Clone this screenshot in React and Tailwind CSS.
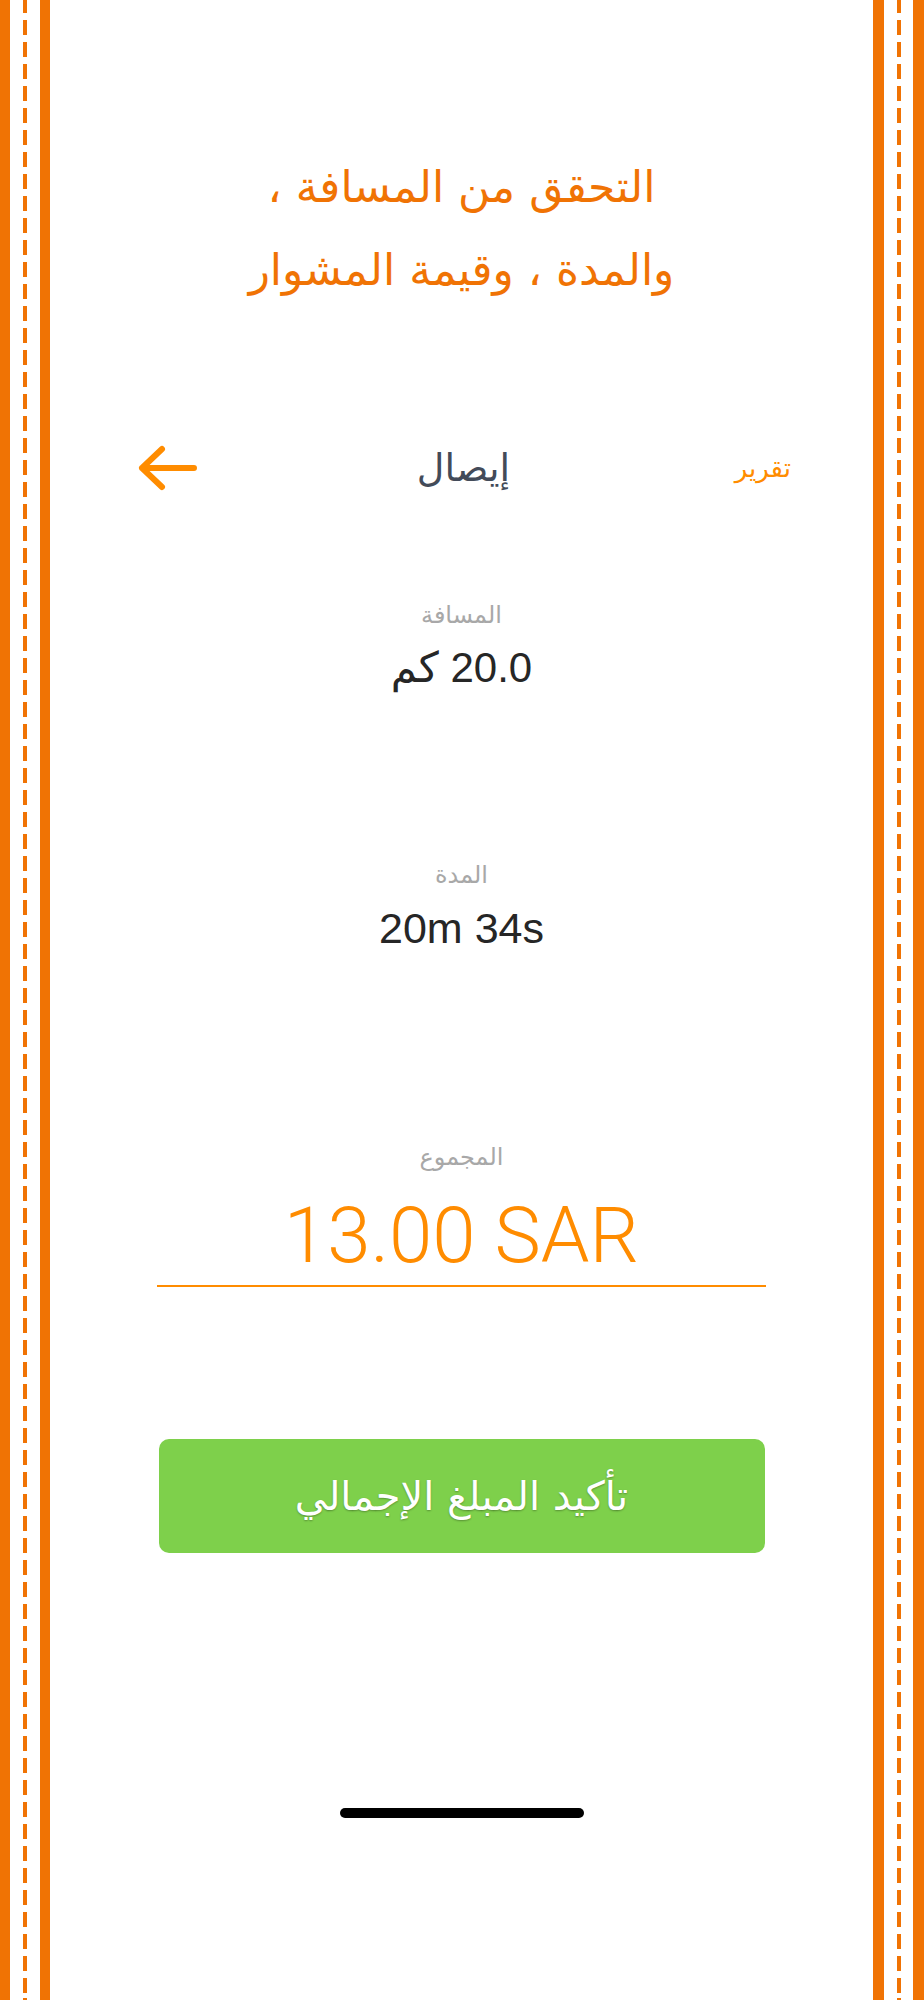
import React from 'react';

const arabic = { fontFamily: '"DejaVu Sans", sans-serif' };
const latin = { fontFamily: '"Liberation Sans", "DejaVu Sans", sans-serif' };

function Rail({ side }) {
  // solid stripe, dashed stripe, solid stripe
  const outer = side === 'left' ? 'w-[10px]' : 'w-[11px]';
  return (
    <div className="flex h-full shrink-0">
      <div className={`${outer} bg-[#f07304]`} />
      <div className="w-[13px]" />
      <div className="w-[4px] bg-[repeating-linear-gradient(to_bottom,#f07304_0px,#f07304_15px,transparent_15px,transparent_22px)] bg-[position:0_-2px]" />
      <div className={side === 'left' ? 'w-[13px]' : 'w-[12px]'} />
      <div className={`${outer} bg-[#f07304]`} />
    </div>
  );
}

function BackArrow() {
  return (
    <svg width="64" height="48" viewBox="0 0 64 48" fill="none">
      <path
        d="M58 24H6M26 5L6 24L26 43"
        stroke="#ff8c00"
        strokeWidth="6"
        strokeLinecap="round"
        strokeLinejoin="round"
      />
    </svg>
  );
}

function Stat({ label, value, top, size }) {
  return (
    <div className={`flex flex-col items-center ${top}`}>
      <div className="text-[24px] leading-[28px] text-[#a8a8a8]" style={arabic} dir="rtl">
        {label}
      </div>
      <div className={`mt-[15px] ${size} leading-[48px] text-[#262626]`} style={latin} dir="rtl">
        {value}
      </div>
    </div>
  );
}

export default function App() {
  return (
    <div className="flex h-[2000px] w-full bg-white">
      <Rail side="left" />

      <div className="flex flex-1 flex-col">
        {/* Title */}
        <h1
          className="mt-[145px] text-center text-[44px] leading-[83px] text-[#f07304]"
          style={arabic}
          dir="rtl"
        >
          التحقق من المسافة ،
          <br />
          والمدة ، وقيمة المشوار
        </h1>

        {/* Header row */}
        <div className="mt-[127px] flex h-[60px] items-center justify-between pl-[86px] pr-[82px]">
          <BackArrow />
          <span className="text-[38px] text-[#434b59]" style={arabic} dir="rtl">
            إيصال
          </span>
          <span className="w-[64px] text-right text-[26px] text-[#ff8c00]" style={arabic} dir="rtl">
            تقرير
          </span>
        </div>

        <Stat label="المسافة" value="20.0 كم" top="mt-[103px]" size="text-[42px]" />
        <Stat label="المدة" value="20m 34s" top="mt-[169px]" size="text-[43px]" />

        {/* Total */}
        <div className="mt-[191px] flex flex-col items-center">
          <div className="text-[24px] leading-[28px] text-[#a8a8a8]" style={arabic} dir="rtl">
            المجموع
          </div>
          <div
            className="mt-[22px] text-[78px] font-light leading-[86px] text-[#ff8c00]"
            style={{ fontFamily: 'Roboto, "Liberation Sans", sans-serif' }}
          >
            13.00 SAR
          </div>
          <div className="mt-[6px] h-[2px] w-[609px] bg-[#ff8c00]" />
        </div>

        <button
          className="mx-auto mt-[152px] flex h-[114px] w-[606px] items-center justify-center rounded-[10px] bg-[#7ed04b] text-[40px] text-white [text-shadow:0_1px_2px_rgba(0,0,0,0.3)]"
          style={arabic}
          dir="rtl"
        >
          تأكيد المبلغ الإجمالي
        </button>

        <div className="mx-auto mt-[255px] h-[10px] w-[244px] rounded-full bg-black" />
      </div>

      <Rail side="right" />
    </div>
  );
}
